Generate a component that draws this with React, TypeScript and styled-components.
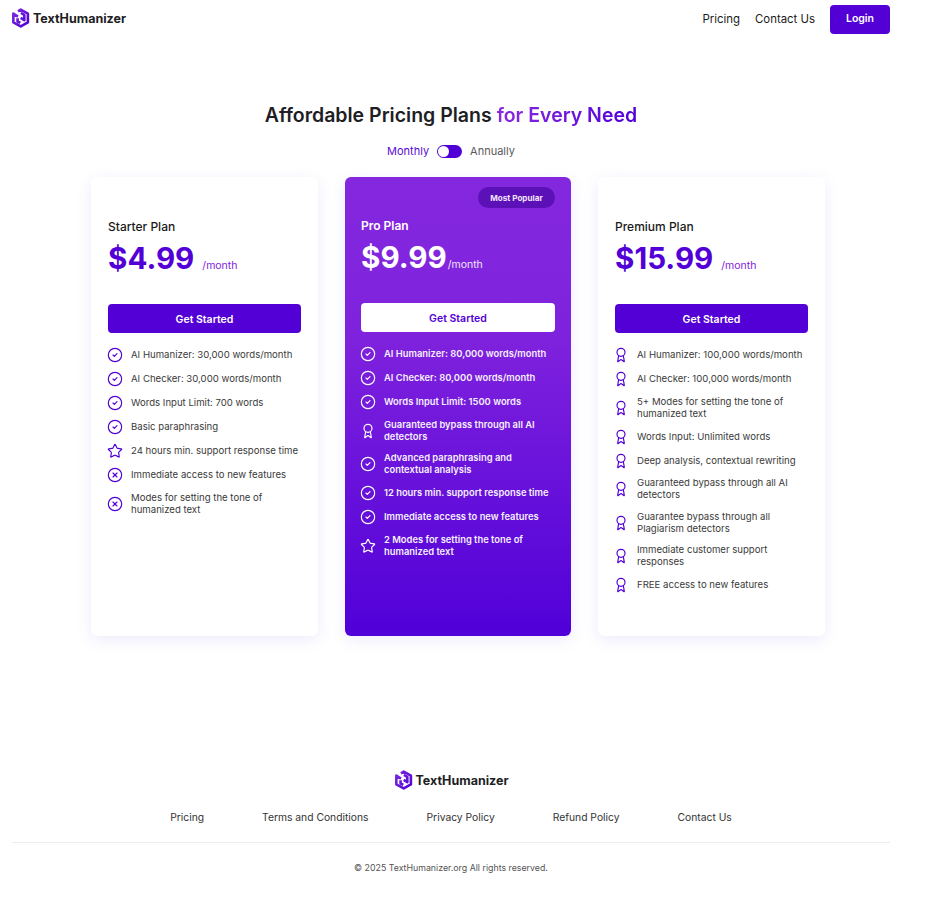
import React from 'react';
import styled, { createGlobalStyle } from 'styled-components';
import { Award, CircleCheck, CircleX, Star } from 'lucide-react';

const GlobalStyle = createGlobalStyle`
  * { box-sizing: border-box; }
  html, body { margin: 0; padding: 0; background: #fff; }
  body { font-family: Inter, "Liberation Sans", sans-serif; color: #1a1a1a; }
`

const Page = styled.div`
  width: 902px;
  height: 919px;
  padding: 0 12px;
`

const Nav = styled.nav`
  height: 38px;
  display: flex;
  align-items: center;
  justify-content: space-between;
`

const LogoWrap = styled.div`
  display: flex;
  align-items: center;
  gap: 3px;
  height: 20px;
  font-size: 12.5px;
  font-weight: 700;
  color: #1e1e24;
`

const NavLogo = styled.div`
  margin: -2px 0 0 -1px;
`

const NavLinks = styled.div`
  display: flex;
  align-items: center;
  gap: 15px;
  font-size: 11.4px;
  color: #1a1a1a;
`

const LoginButton = styled.button`
  width: 60px;
  height: 29px;
  margin-top: 1px;
  padding: 0 0 2px;
  border: 0;
  border-radius: 4px;
  background: #5300d6;
  color: #fff;
  font: 600 10.5px Inter, sans-serif;
`

const Heading = styled.h1`
  margin: 65px 0 0;
  text-align: center;
  font-size: 19.5px;
  line-height: 24px;
  font-weight: 600;
  color: #1e1e24;
`

const Accent = styled.span`
  background: linear-gradient(90deg, #8a2be2, #5000d6);
  -webkit-background-clip: text;
  background-clip: text;
  color: transparent;
`

const Toggle = styled.div`
  margin-top: 16px;
  display: flex;
  justify-content: center;
  align-items: center;
  gap: 8px;
  font-size: 11px;
  height: 16px;
`

const ToggleLabel = styled.span<{ $active?: boolean }>`
  color: ${p => (p.$active ? '#5a0bd6' : '#5a5a5a')};
`

const Switch = styled.span`
  width: 25px;
  height: 13px;
  border-radius: 7px;
  background: #5000d6;
  display: flex;
  align-items: center;
  padding-left: 1px;
`

const Knob = styled.span`
  width: 11px;
  height: 11px;
  border-radius: 50%;
  background: #fff;
`

const Cards = styled.div`
  margin: 18px 0 0 79px;
  width: 734px;
  display: grid;
  grid-template-columns: 227px 226px 227px;
  column-gap: 27px;
`

const Card = styled.section<{ $featured?: boolean }>`
  position: relative;
  height: 459px;
  border-radius: 6px;
  padding: ${p => (p.$featured ? '42px 16px 0' : '43px 17px 0')};
  background: ${p => (p.$featured ? 'linear-gradient(180deg, #8428df 0%, #7f22dd 35%, #5000d8 100%)' : '#fff')};
  box-shadow: 0 4px 16px rgba(90, 60, 220, 0.1);
  color: ${p => (p.$featured ? '#fff' : '#1a1a1a')};
`

const Badge = styled.span`
  position: absolute;
  top: 10px;
  right: 16px;
  width: 77px;
  height: 21px;
  border-radius: 11px;
  background: #5c10b8;
  color: #f3e8ff;
  font-size: 8.1px;
  font-weight: 700;
  display: flex;
  align-items: center;
  justify-content: center;
`

const PlanName = styled.h2<{ $featured?: boolean }>`
  margin: 0;
  font-size: 12px;
  line-height: 14px;
  font-weight: ${p => (p.$featured ? 600 : 500)};
`

const PriceRow = styled.div`
  margin-top: 3px;
  height: 42px;
  display: flex;
  align-items: center;
`

const Price = styled.span<{ $featured?: boolean }>`
  font-size: 29.6px;
  font-weight: 700;
  color: ${p => (p.$featured ? '#fff' : '#5300d6')};
`

const Period = styled.span<{ $featured?: boolean }>`
  margin: 14px 0 0 ${p => (p.$featured ? '1px' : '8px')};
  font-size: 10.5px;
  color: ${p => (p.$featured ? '#f1e6ff' : '#7f22dd')};
`

const CtaButton = styled.button<{ $featured?: boolean }>`
  display: block;
  width: 100%;
  height: 29px;
  margin-top: 25px;
  padding: 2px 0 0;
  border: 0;
  border-radius: 4px;
  font: 600 10.5px Inter, sans-serif;
  background: ${p => (p.$featured ? '#fff' : '#5300d6')};
  color: ${p => (p.$featured ? '#5300d6' : '#fff')};
`

const Features = styled.ul`
  list-style: none;
  margin: 14px 0 0;
  padding: 0;
  display: flex;
  flex-direction: column;
  gap: 8px;
`

const Feature = styled.li<{ $featured?: boolean; $shift: number }>`
  display: flex;
  align-items: center;
  gap: 8px;
  min-height: 16px;
  font-size: ${p => (p.$featured ? '9.4px' : '9.6px')};
  line-height: 12px;
  font-weight: ${p => (p.$featured ? 600 : 400)};
  color: ${p => (p.$featured ? '#f6efff' : '#3a3a3a')};
  svg {
    flex: none;
    margin-left: ${p => p.$shift}px;
  }
  span {
    padding: 0.75px 0;
  }
`

const Footer = styled.footer`
  margin-top: 134px;
`

const FooterLogo = styled.div`
  display: flex;
  justify-content: center;
`

const FooterLinks = styled.div`
  margin-top: 20px;
  display: flex;
  justify-content: center;
  gap: 58px;
  font-size: 10.3px;
  line-height: 14px;
  color: #333;
`

const Divider = styled.hr`
  margin: 18px 0 0;
  border: 0;
  border-top: 1px solid #ececf0;
`

const Copyright = styled.p`
  margin: 18px 0 0;
  text-align: center;
  font-size: 8.8px;
  line-height: 14px;
  color: #555;
`

const LogoMark = () => (
  <svg width="19" height="20" viewBox="0 0 18 19" fill="none" stroke="url(#logoGrad)" strokeWidth="2.5" strokeLinejoin="round">
    <defs>
      <linearGradient id="logoGrad" gradientUnits="userSpaceOnUse" x1="1" y1="3" x2="17" y2="16">
        <stop offset="0" stopColor="#7d2be0" />
        <stop offset="1" stopColor="#5000d6" />
      </linearGradient>
    </defs>
    <path d="M6.6 3.2 9.2 1.6 16 5.4v8.2L9.2 17.4 2.2 13.6V5.4L6.6 8.2" />
    <path d="M6.2 9.8v3l2.6 1.4" />
    <path d="M9.4 4.6 12.6 6.6v5l-3.4-2.2" />
  </svg>
)

const Logo = () => (
  <LogoWrap>
    <LogoMark />
    TextHumanizer
  </LogoWrap>
)

type IconKind = 'check' | 'star' | 'x' | 'award'
type Item = [string, IconKind?]

const icons = { check: CircleCheck, star: Star, x: CircleX, award: Award }

const plans: { name: string; price: string; icon: IconKind; featured?: boolean; shift: number; items: Item[] }[] = [
  {
    name: 'Starter Plan',
    price: '$4.99',
    icon: 'check',
    shift: -1,
    items: [
      ['AI Humanizer: 30,000 words/month'],
      ['AI Checker: 30,000 words/month'],
      ['Words Input Limit: 700 words'],
      ['Basic paraphrasing'],
      ['24 hours min. support response time', 'star'],
      ['Immediate access to new features', 'x'],
      ['Modes for setting the tone of humanized text', 'x'],
    ],
  },
  {
    name: 'Pro Plan',
    price: '$9.99',
    icon: 'check',
    featured: true,
    shift: -1,
    items: [
      ['AI Humanizer: 80,000 words/month'],
      ['AI Checker: 80,000 words/month'],
      ['Words Input Limit: 1500 words'],
      ['Guaranteed bypass through all AI detectors', 'award'],
      ['Advanced paraphrasing and contextual analysis'],
      ['12 hours min. support response time'],
      ['Immediate access to new features'],
      ['2 Modes for setting the tone of humanized text', 'star'],
    ],
  },
  {
    name: 'Premium Plan',
    price: '$15.99',
    icon: 'award',
    shift: -2,
    items: [
      ['AI Humanizer: 100,000 words/month'],
      ['AI Checker: 100,000 words/month'],
      ['5+ Modes for setting the tone of humanized text'],
      ['Words Input: Unlimited words'],
      ['Deep analysis, contextual rewriting'],
      ['Guaranteed bypass through all AI detectors'],
      ['Guarantee bypass through all Plagiarism detectors'],
      ['Immediate customer support responses'],
      ['FREE access to new features'],
    ],
  },
]

const footerLinks = ['Pricing', 'Terms and Conditions', 'Privacy Policy', 'Refund Policy', 'Contact Us']

const App = (): JSX.Element => (
  <Page>
    <GlobalStyle />
    <Nav>
      <NavLogo>
        <Logo />
      </NavLogo>
      <NavLinks>
        <span>Pricing</span>
        <span>Contact Us</span>
        <LoginButton>Login</LoginButton>
      </NavLinks>
    </Nav>
    <Heading>
      Affordable Pricing Plans <Accent>for Every Need</Accent>
    </Heading>
    <Toggle>
      <ToggleLabel $active>Monthly</ToggleLabel>
      <Switch>
        <Knob />
      </Switch>
      <ToggleLabel>Annually</ToggleLabel>
    </Toggle>
    <Cards>
      {plans.map(plan => (
        <Card key={plan.name} $featured={plan.featured}>
          {plan.featured && <Badge>Most Popular</Badge>}
          <PlanName $featured={plan.featured}>{plan.name}</PlanName>
          <PriceRow>
            <Price $featured={plan.featured}>{plan.price}</Price>
            <Period $featured={plan.featured}>/month</Period>
          </PriceRow>
          <CtaButton $featured={plan.featured}>Get Started</CtaButton>
          <Features>
            {plan.items.map(([text, kind]) => {
              const Icon = icons[kind ?? plan.icon]
              return (
                <Feature key={text} $featured={plan.featured} $shift={plan.shift}>
                  <Icon size={16} strokeWidth={1.75} color={plan.featured ? '#fff' : '#5300d6'} />
                  <span>{text}</span>
                </Feature>
              )
            })}
          </Features>
        </Card>
      ))}
    </Cards>
    <Footer>
      <FooterLogo>
        <Logo />
      </FooterLogo>
      <FooterLinks>
        {footerLinks.map(link => (
          <span key={link}>{link}</span>
        ))}
      </FooterLinks>
      <Divider />
      <Copyright>© 2025 TextHumanizer.org All rights reserved.</Copyright>
    </Footer>
  </Page>
);

export default App;
